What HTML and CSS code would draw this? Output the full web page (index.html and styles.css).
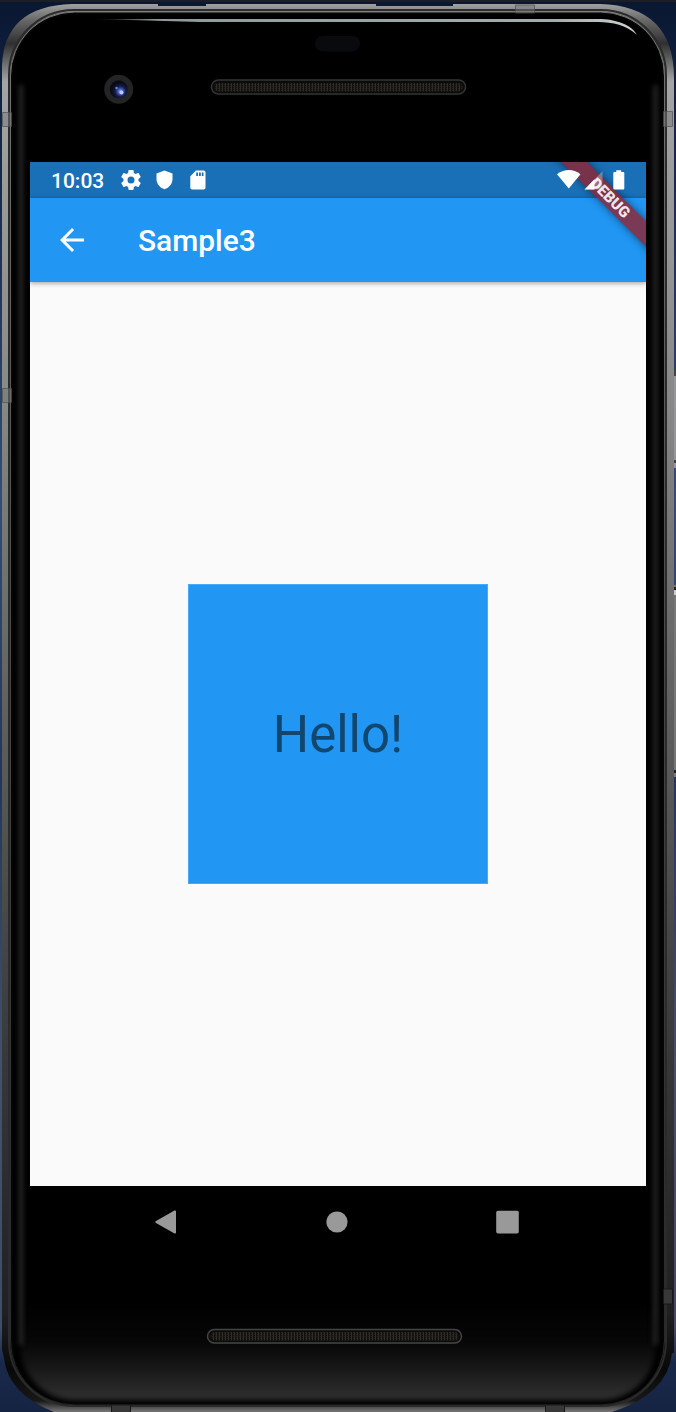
FILE: index.html
```html
<!DOCTYPE html>
<html lang="en">
<head>
<meta charset="utf-8">
<title>Sample3</title>
<link rel="stylesheet" href="styles.css">
</head>
<body>
<div class="device">
  <svg class="frame" width="676" height="1412" viewBox="0 0 676 1412" aria-hidden="true">
    <defs>
      <linearGradient id="desk" x1="0" y1="0" x2="0" y2="1"><stop offset="0" stop-color="#091731"/><stop offset=".12" stop-color="#17294d"/><stop offset=".35" stop-color="#344d77"/><stop offset=".55" stop-color="#22365d"/><stop offset=".75" stop-color="#44506c"/><stop offset=".94" stop-color="#424b68"/><stop offset=".965" stop-color="#19294b"/><stop offset="1" stop-color="#152442"/></linearGradient>
      <linearGradient id="metal" x1="0" y1="0" x2="0" y2="1"><stop offset="0" stop-color="#a0a0a0"/><stop offset=".012" stop-color="#666"/><stop offset=".028" stop-color="#303030"/><stop offset=".055" stop-color="#a4a4a4"/><stop offset=".28" stop-color="#888"/><stop offset=".5" stop-color="#606060"/><stop offset=".75" stop-color="#383838"/><stop offset=".93" stop-color="#202020"/><stop offset=".97" stop-color="#080808"/><stop offset=".992" stop-color="#181818"/><stop offset="1" stop-color="#777"/></linearGradient>
      <linearGradient id="rim" x1="0" y1="0" x2="0" y2="1"><stop offset="0" stop-color="#777"/><stop offset=".5" stop-color="#444"/><stop offset="1" stop-color="#262626"/></linearGradient>
      <linearGradient id="chin" x1="0" y1="1300" x2="0" y2="1402" gradientUnits="userSpaceOnUse"><stop offset="0" stop-color="#000"/><stop offset=".4" stop-color="#060606"/><stop offset=".65" stop-color="#161616"/><stop offset=".9" stop-color="#2a2a2a"/><stop offset="1" stop-color="#303030"/></linearGradient>
      <linearGradient id="shine" x1="0" x2="1"><stop offset="0" stop-color="#9aa3a6" stop-opacity="0"/><stop offset=".12" stop-color="#8f999c"/><stop offset=".85" stop-color="#a4acae"/><stop offset="1" stop-color="#cfd4d5"/></linearGradient>
      <radialGradient id="lens" cx=".6" cy=".62"><stop offset="0" stop-color="#a7b5ff"/><stop offset=".28" stop-color="#4258bb"/><stop offset=".6" stop-color="#131b43"/><stop offset="1" stop-color="#090b16"/></radialGradient>
      <pattern id="mesh" width="3" height="2" patternUnits="userSpaceOnUse"><rect width="3" height="2" fill="#12110f"/><rect width="1" height="2" fill="#302d27"/><rect x="2" width="1" height="1" fill="#25231e"/></pattern>
      <filter id="soft" filterUnits="userSpaceOnUse" x="0" y="0" width="676" height="1412" color-interpolation-filters="sRGB"><feGaussianBlur stdDeviation="2.500"/></filter>
    </defs>
    <rect width="676" height="1412" fill="url(#desk)"/>
    <rect width="676" height="2" fill="#1b1e27"/>
    <!-- side buttons -->
    <path d="M673 370h3v98h-3z" fill="#96979a"/><path d="M673 370h3v6h-3zM673 460h3v3h-3z" fill="#444"/>
    <path d="M672 585h4v192h-4z" fill="#777"/><path d="M672 587h4v3h-4zM672 770h4v3h-4z" fill="#222"/>
    <path d="M672 590h4v5h-4z" fill="#ccc"/>
    <!-- metal body -->
    <path d="M72 4H600Q674 6 674 78V1353H672Q668 1394 612 1412H54Q8 1394 4 1358L2 1350V66Q4 6 72 4Z" fill="url(#metal)"/>
    <path d="M158 4h48v2h-48zM376 4h77v2h-77z" fill="#0b1730"/>
    <rect x="9" y="10" width="657" height="1396" rx="65" fill="none" stroke="#2b2b2b" stroke-width="2"/>
    <rect x="10.500" y="12" width="654" height="1393" rx="64" fill="#050505" stroke="url(#rim)"/>
    <rect x="13" y="14.500" width="649" height="1389" rx="61" fill="#000"/>
    <rect x="20.500" y="24" width="635" height="1376" rx="54" fill="url(#chin)" filter="url(#soft)"/>
    <path d="M21 85V1345M655.500 85V1345" stroke="#2a2a2a" stroke-width="4" filter="url(#soft)"/>
    <!-- antenna bands -->
    <path d="M2.500 112.500h9v14h-9zM2.500 388.500h9v14h-9zM663.500 111.500h9v15h-9zM515.500 5h19v8h-19z" fill="#777" fill-opacity=".5" stroke="#505050" stroke-opacity=".7"/>
    <path d="M663.500 1289h9v15h-9zM111.500 1405h19v8h-19zM545.500 1405h19v8h-19z" fill="#383838" stroke="#181818"/>
    <!-- glass highlight -->
    <path d="M93 19H598C616 19 632 25 637 35C626 25 613 22 598 22H200Z" fill="url(#shine)"/>
    <!-- camera and sensor -->
    <circle cx="118.700" cy="89.300" r="14.500" fill="#242424"/><circle cx="118.700" cy="89.300" r="9" fill="url(#lens)"/>
    <circle cx="116.500" cy="88" r="1.200" fill="#6a89dc"/><circle cx="121.500" cy="92.500" r="2" fill="#bdc7ff"/>
    <rect x="315" y="36" width="45" height="15.500" rx="7.750" fill="#090a0e"/>
    <!-- speakers -->
    <rect x="211.500" y="80" width="254" height="14" rx="7" fill="#0b0b0b" stroke="#343433" stroke-width="1.500"/>
    <rect x="214.500" y="83" width="248" height="8.500" rx="4.250" fill="url(#mesh)"/>
    <rect x="207.500" y="1329.500" width="254" height="13.500" rx="6.750" fill="#0b0b0b" stroke="#454543" stroke-width="1.500"/>
    <rect x="210.500" y="1332" width="248" height="8.500" rx="4.250" fill="url(#mesh)"/>
  </svg>

  <main class="screen">
    <header class="status">
      <span class="clock">10:03</span>
      <svg class="gear" width="24" height="24" viewBox="0 0 24 24"><path d="M19.430 12.980c.04-.32.07-.64.07-.98s-.03-.66-.07-.98l2.110-1.650c.19-.15.24-.42.12-.64l-2-3.460c-.12-.22-.39-.3-.61-.22l-2.490 1c-.52-.4-1.080-.73-1.690-.98l-.38-2.650C14.460 2.180 14.250 2 14 2h-4c-.25 0-.46.18-.49.42l-.38 2.650c-.61.25-1.170.59-1.690.98l-2.490-1c-.23-.09-.49 0-.61.22l-2 3.460c-.13.22-.07.49.12.64l2.110 1.650c-.04.32-.07.65-.07.98s.03.66.07.98l-2.110 1.650c-.19.15-.24.42-.12.64l2 3.460c.12.22.39.3.61.22l2.490-1c.52.4 1.080.73 1.690.98l.38 2.650c.03.24.24.42.49.42h4c.25 0 .46-.18.49-.42l.38-2.650c.61-.25 1.170-.59 1.690-.98l2.490 1c.23.09.49 0 .61-.22l2-3.460c.12-.22.07-.49-.12-.64zM12 15.500A3.500 3.500 0 1 1 12 8.500A3.500 3.500 0 0 1 12 15.500z"/></svg>
      <svg class="shield" width="17" height="20" viewBox="0 0 17 20"><path d="M8.500.5L16.500 3.500V9C16.500 13.700 13.300 17.700 8.500 19.300C3.700 17.700.5 13.700.5 9V3.500Z"/></svg>
      <svg class="card" width="16" height="20" viewBox="0 0 16 20"><path fill-rule="evenodd" d="M6 .5H13.700Q15.500.5 15.500 2.300V17.700Q15.500 19.500 13.700 19.500H2.100Q.3 19.500.3 17.700V6.200ZM6.200 2.500V6H8V2.500ZM9 2.500V6H10.800V2.500ZM11.800 2.500V6H13.500V2.500Z"/></svg>
      <span class="spacer"></span>
      <svg class="wifi" width="24" height="19" viewBox="0 0 24 19"><path d="M0 4.200Q12-4 23.500 4.200L11.800 18.500Z"/></svg>
      <svg class="signal" width="19" height="19" viewBox="0 0 19 19"><path d="M18.500.3V18.500H.5Z" opacity=".3"/><path d="M10.500 8.200V18.500H.5Z"/></svg>
      <svg class="battery" width="12" height="20" viewBox="0 0 12 20"><path d="M3.300.2H8.200V2H10.200Q11.300 2 11.300 3.100V18.500Q11.300 19.600 10.200 19.600H1.400Q.3 19.600.3 18.500V3.100Q.3 2 1.400 2H3.300Z"/></svg>
    </header>
    <nav class="appbar">
      <svg class="back" width="36" height="36" viewBox="0 0 24 24"><path d="M20 11H7.830l5.590-5.590L12 4l-8 8 8 8 1.410-1.410L7.830 13H20v-2z"/></svg>
      <h1 class="title">Sample3</h1>
    </nav>
    <section class="content"><div class="box">Hello!</div></section>
    <div class="ribbon">DEBUG</div>
  </main>

  <footer class="keys">
    <svg width="24" height="26" viewBox="0 0 24 26"><path d="M2 12L20.500 1.600Q22 .9 22 2.500V23.500Q22 25 20.500 24.400L2 14Q.2 13 2 12Z"/></svg>
    <svg width="22" height="22" viewBox="0 0 22 22"><circle cx="11" cy="11" r="10.600"/></svg>
    <svg width="24" height="24" viewBox="0 0 24 24"><rect x=".2" y=".8" width="22.600" height="22.700" rx="1.700"/></svg>
  </footer>
</div>
</body>
</html>
```
FILE: styles.css
```css
* { box-sizing: border-box; }
body { margin: 0; background: #101c34; font-family: Roboto, "Noto Sans", sans-serif; }
.device { position: relative; width: 676px; height: 1412px; padding: 162px 30px 0; overflow: hidden; }
.frame { position: absolute; top: 0; left: 0; }
.screen { position: relative; display: flex; flex-direction: column; width: 616px; height: 1024px; background: #fafafa; overflow: hidden; }
.status { display: flex; align-items: center; height: 36px; padding: 0 21.500px 0 21px; background: #1a70b7; color: #fff; }
.status svg, .back { display: block; flex: none; fill: #fff; }
.status svg { position: relative; z-index: 2; }
.clock { width: 68px; padding-top: 2px; font-size: 21px; line-height: 24px; font-weight: 500; }
.gear { width: 24px; }
.shield { margin-left: 13px; }
.card { margin-left: 17px; }
.spacer { flex: 1; }
.wifi { margin-bottom: 1px; }
.signal { margin-left: 3px; }
.battery { margin-left: 10px; }
.appbar { display: flex; align-items: center; height: 84px; padding-left: 24px; background: #2196f3; box-shadow: 0 1px 5px rgba(0, 0, 0, .4); }
.title { margin: 2px 0 0 48px; color: #fff; font-size: 29.900px; line-height: 36px; font-weight: 500; }
.content { flex: 1; display: flex; align-items: center; justify-content: center; }
.box { display: flex; align-items: center; justify-content: center; width: 300px; height: 300px; padding-top: 2px; background: #2196f3; border: 1px solid #4aa9f5; color: #11466e; font-size: 51px; line-height: 60px; }
.ribbon { position: absolute; z-index: 1; top: 27px; right: -69px; width: 210px; height: 18px; transform: rotate(45deg); background: rgba(142, 36, 50, .82); box-shadow: 0 0 9px rgba(0, 0, 0, .5); color: rgba(255, 255, 255, .88); font-size: 15.300px; line-height: 18px; font-weight: 900; text-align: center; }
.keys { position: relative; display: flex; align-items: center; justify-content: space-between; height: 72px; padding: 0 126px 0 124px; fill: #999; }
```
